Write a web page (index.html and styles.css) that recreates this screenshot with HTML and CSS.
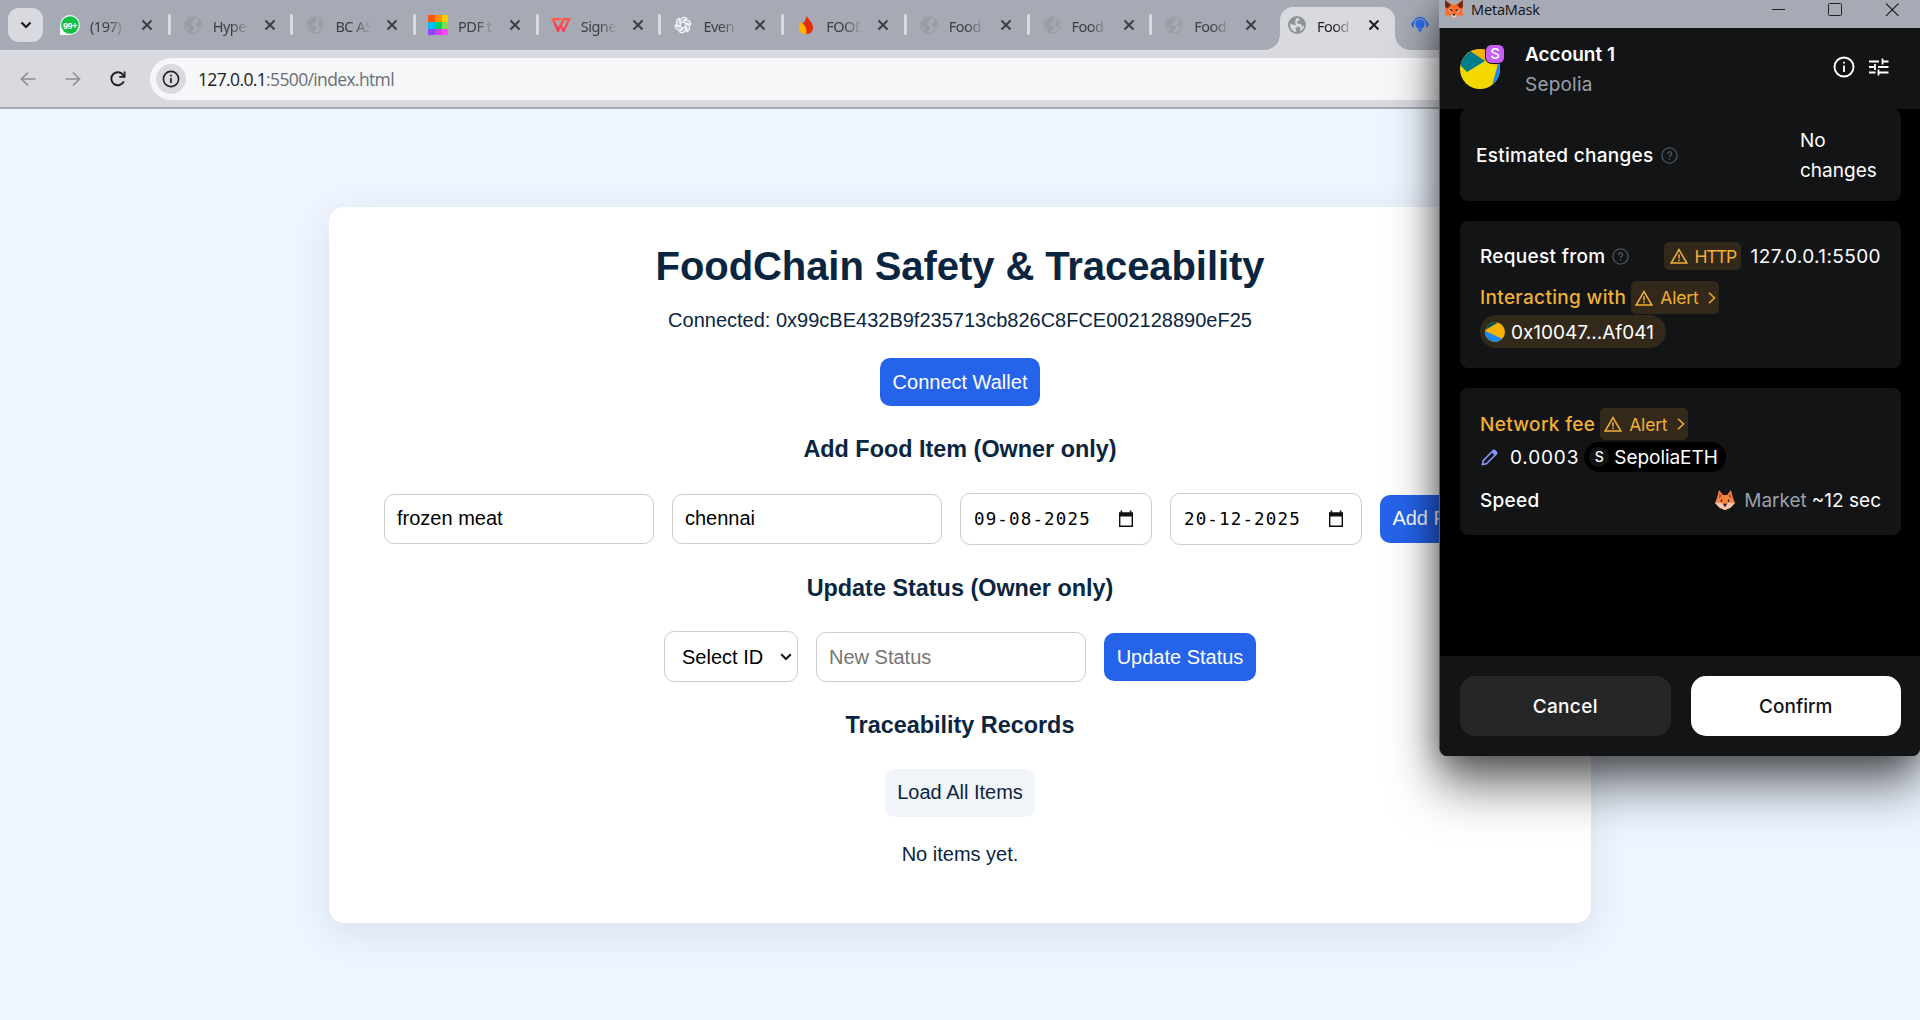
FILE: index.html
```html
<!DOCTYPE html>
<html lang="en">
<head>
<meta charset="utf-8">
<title>FoodChain Safety &amp; Traceability</title>
<link rel="stylesheet" href="styles.css">
</head>
<body>
<svg class="defs" aria-hidden="true">
  <symbol id="globe" viewBox="0 0 18 18"><circle cx="9" cy="9" r="8.2" fill="none" stroke="currentColor" stroke-width="1.3"/><path fill="currentColor" d="M2 6.5 6 2.6 10 1.8 11.5 3.2 9.5 4.6 9.3 6.6 7.2 7.4 6.4 9.2 9 9.4 10.8 11 10.4 13 8.6 14 8 16.6 5 15.6 4.6 12.4 2 9.6ZM13 4 15.8 6.6 16.6 9.8 14.6 11.4 12.6 10.6 12 8.4 13.4 7Z"/></symbol>
  <symbol id="globe-solid" viewBox="0 0 18 18"><circle cx="9" cy="9" r="9" fill="currentColor"/><path fill="#d9dae0" d="M2 7.5 6 9 9.500 9 9.500 11 7.500 12 8.500 16 5.500 15.500 2.500 12ZM8 2.500 11.500 2 11 4.500 9 5.500 9.500 7.500 13 8 14 11 16 9 15.500 12.500 12 15.500 12.500 12 8 9 7 6Z"/></symbol>
  <symbol id="close" viewBox="0 0 12 12"><path d="M1.5 1.5 10.5 10.5M10.5 1.5 1.5 10.5" fill="none" stroke="currentColor" stroke-width="2"/></symbol>
  <symbol id="warn" viewBox="0 0 18 16"><path d="M9 1.6 16.8 15H1.2Z" fill="none" stroke="currentColor" stroke-width="1.5"/><path d="M9 6.3V10.4M9 11.6V13.2" stroke="currentColor" stroke-width="1.5"/></symbol>
  <symbol id="chev" viewBox="0 0 8 12"><path d="M1 .8 6.5 6 1 11.2" fill="none" stroke="currentColor" stroke-width="1.5"/></symbol>
  <symbol id="help" viewBox="0 0 17 17"><circle cx="8.5" cy="8.5" r="7.6" fill="none" stroke="currentColor" stroke-width="1.4"/><path d="M6.5 7A2 2 0 1 1 9.4 8.6Q8.5 9.1 8.5 10M8.5 11.2V12.7" fill="none" stroke="currentColor" stroke-width="1.4"/></symbol>
  <symbol id="cal" viewBox="0 0 16 18"><path d="M1.7 6V16.2H14.3V6" fill="none" stroke="#111" stroke-width="1.4"/><path d="M1 2.2H2.6V.6H4.2V2.2H11.8V.6H13.4V2.2H15V6.4H1Z" fill="#111"/></symbol>
  <symbol id="fox" viewBox="0 0 20 18"><path d="M1 0 8 4.5H12L19 0 19 8 18 12 19 16 14 15 12 17.5H8L6 15 1 16 2 12 1 8Z" fill="#ff6a2a"/><path d="M1 0 7 5 3.5 8.6 1.2 7ZM19 0 13 5 16.500 8.600 18.800 7Z" fill="#6b2a16"/><path d="M3.5 9 7 8 8.5 12 6 14ZM16.5 9 13 8 11.5 12 14 14Z" fill="#ff9160"/><path d="M5.8 9 8.2 10.2 7.6 11.2ZM14.2 9 11.8 10.2 12.4 11.2Z" fill="#2a1a3a" stroke="#2a1a3a" stroke-width=".6"/><path d="M7.5 14H12.5L12 17.5H8Z" fill="#ded5ce"/><path d="M8.500 14H11.500L11 15.600H9Z" fill="#251a1a"/></symbol>
</svg>

<div class="browser">
  <div class="tabstrip">
    <div class="tabsearch"><svg width="12" height="8" viewBox="0 0 12 8"><path d="M1.5 1.5 6 6 10.5 1.5" fill="none" stroke="#1d1e22" stroke-width="2.2"/></svg></div>
    <div class="tab"><svg class="fav" viewBox="0 0 20 20"><path d="M0 20V10A10 10 0 1 1 10 20Z" fill="#f4f7f5"/><circle cx="10" cy="10" r="8.8" fill="#12c143"/><text x="10" y="13.6" text-anchor="middle" class="wa">99+</text></svg><span class="tt">(197)</span><svg class="x"><use href="#close"/></svg></div>
    <div class="tab"><svg class="fav dim"><use href="#globe"/></svg><span class="tt">Hype</span><svg class="x"><use href="#close"/></svg></div>
    <div class="tab"><svg class="fav dim"><use href="#globe"/></svg><span class="tt">BC AS</span><svg class="x"><use href="#close"/></svg></div>
    <div class="tab"><svg class="fav" viewBox="0 0 20 20" shape-rendering="crispEdges"><path fill="#ff5500" d="M0 0h7v7H0z"/><path fill="#ff9000" d="M7 0h7v7H7z"/><path fill="#ffcc00" d="M14 0h6v7h-6z"/><path fill="#00bbff" d="M0 7h7v7H0z"/><path fill="#00d166" d="M7 7h7v7H7z"/><path fill="#7de048" d="M14 7h6v7h-6z"/><path fill="#8a47ff" d="M0 14h7v6H0z"/><path fill="#cf40f5" d="M7 14h7v6H7z"/><path fill="#ff48fa" d="M14 14h6v6h-6z"/></svg><span class="tt">PDF t</span><svg class="x"><use href="#close"/></svg></div>
    <div class="tab"><svg class="fav" viewBox="0 0 20 20"><defs><linearGradient id="wps" x2="0" y2="1"><stop stop-color="#ff5b45"/><stop offset="1" stop-color="#ff3355"/></linearGradient></defs><path d="M0 3H10.500L9.300 5.300H3.700L7.300 12.500 12 3H20L13.300 17H11.800L9.800 12.800 7.700 17H6.300ZM13.300 5.300 11 10.200 12.600 13.500 16.500 5.300Z" fill="url(#wps)" fill-rule="evenodd"/></svg><span class="tt">Signe</span><svg class="x"><use href="#close"/></svg></div>
    <div class="tab"><svg class="fav" viewBox="0 0 20 20"><g fill="none" stroke="#f2f3f5" stroke-width="1.4"><path id="petal" d="M7.400 11.500V5.600A3.700 3.700 0 0 1 13.700 3.500L9.500 6"/><use href="#petal" transform="rotate(60 10 10)"/><use href="#petal" transform="rotate(120 10 10)"/><use href="#petal" transform="rotate(180 10 10)"/><use href="#petal" transform="rotate(240 10 10)"/><use href="#petal" transform="rotate(300 10 10)"/></g></svg><span class="tt">Even</span><svg class="x"><use href="#close"/></svg></div>
    <div class="tab"><svg class="fav" viewBox="0 0 20 20"><path d="M10.500 1C13 5 17 8 17 13A6.300 6.300 0 0 1 6 17Q5 13 6 9Q10 6 10.500 1Z" fill="#e22f04"/><path d="M4 7.500C7 8.500 11 11 10.500 18.500A5.500 5.500 0 0 1 3 12Q3.600 10 4 7.500Z" fill="#ffb400"/></svg><span class="tt">FOOD</span><svg class="x"><use href="#close"/></svg></div>
    <div class="tab"><svg class="fav dim"><use href="#globe"/></svg><span class="tt">Food</span><svg class="x"><use href="#close"/></svg></div>
    <div class="tab"><svg class="fav dim"><use href="#globe"/></svg><span class="tt">Food</span><svg class="x"><use href="#close"/></svg></div>
    <div class="tab last"><svg class="fav dim"><use href="#globe"/></svg><span class="tt">Food</span><svg class="x"><use href="#close"/></svg></div>
    <div class="tab active"><svg class="fav grey"><use href="#globe-solid"/></svg><span class="tt">Food</span><svg class="x"><use href="#close"/></svg></div>
    <div class="tab agent"><svg class="fav" viewBox="0 0 20 20"><circle cx="10" cy="9" r="4.800" fill="#2f6de8"/><path d="M3.500 9A6.500 6.500 0 0 1 16.500 9" fill="none" stroke="#2f6de8" stroke-width="1.400"/><path d="M3.500 6.500V12A3 3 0 0 1 3.500 6.500ZM16.500 6.500V12A3 3 0 0 0 16.500 6.500ZM8 14.800H12L10 16.500Z" fill="#2f6de8" stroke="#2f6de8"/></svg></div>
  </div>
  <div class="toolbar">
    <svg class="nav" viewBox="0 0 16 16"><path d="M15.500 8H2M8 1.500 1.500 8 8 14.500" fill="none" stroke="#8e9096" stroke-width="1.700"/></svg>
    <svg class="nav" viewBox="0 0 16 16"><path d="M.5 8H14M8 1.500 14.500 8 8 14.500" fill="none" stroke="#8e9096" stroke-width="1.700"/></svg>
    <svg class="nav reload" viewBox="0 0 16 16"><path d="M13.800 10.300A6.500 6.500 0 1 1 13.300 4.200L14.500 5.500" fill="none" stroke="#1f2023" stroke-width="2"/><path d="M15.500 .5V6.800H9.200V5H13.700V.5Z" fill="#1f2023"/></svg>
    <div class="omnibox">
      <span class="info"><svg width="18" height="18" viewBox="0 0 18 18"><circle cx="9" cy="9" r="7.600" fill="none" stroke="#222326" stroke-width="1.600"/><path d="M9 8V13M9 4.800V6.500" stroke="#222326" stroke-width="1.700"/></svg></span>
      <span class="url">127.0.0.1<span class="path">:5500/index.html</span></span>
    </div>
  </div>
  <main class="page">
    <section class="card">
      <h1>FoodChain Safety &amp; Traceability</h1>
      <p class="wallet">Connected: 0x99cBE432B9f235713cb826C8FCE002128890eF25</p>
      <button class="btn connect">Connect Wallet</button>
      <h3>Add Food Item (Owner only)</h3>
      <div class="row">
        <input class="field" type="text" value="frozen meat">
        <input class="field" type="text" value="chennai">
        <div class="date"><span>09-08-2025</span><svg width="16" height="18"><use href="#cal"/></svg></div>
        <div class="date"><span>20-12-2025</span><svg width="16" height="18"><use href="#cal"/></svg></div>
        <button class="btn add">Add Food Item</button>
      </div>
      <h3>Update Status (Owner only)</h3>
      <div class="row second">
        <div class="select"><span>Select ID</span><svg width="12" height="8" viewBox="0 0 12 8"><path d="M1.200 1.200 6 6 10.800 1.200" fill="none" stroke="#111" stroke-width="2"/></svg></div>
        <input class="field" type="text" placeholder="New Status">
        <button class="btn update">Update Status</button>
      </div>
      <h3>Traceability Records</h3>
      <button class="btn load">Load All Items</button>
      <p class="empty">No items yet.</p>
    </section>
  </main>
</div>

<aside class="popup">
  <div class="titlebar">
    <svg class="foxicon"><use href="#fox"/></svg><span class="apptitle">MetaMask</span>
    <svg class="winctl" viewBox="0 0 130 16"><path d="M2 9.500H15" stroke="#222" stroke-width="1"/><rect x="58.500" y="3.500" width="13" height="12" rx="1" fill="none" stroke="#222"/><path d="M116 3.500 128.500 16M128.500 3.500 116 16" stroke="#222" stroke-width="1.100"/></svg>
  </div>
  <header class="account">
    <svg class="avatar" viewBox="0 0 46 46"><defs><clipPath id="av"><circle cx="20" cy="26" r="20"/></clipPath></defs><g clip-path="url(#av)"><path fill="#f5d800" d="M0 0H46V46H0z"/><path fill="#f3b300" d="M5 10 24 17.500 40 24 46 0H5Z"/><path fill="#017d8b" d="M-2 20 10 8 25 18 7 29Z"/><path fill="#1689f5" d="M40 14 31 46H46V14Z"/></g><rect x="25.500" y="1.500" width="19" height="19" rx="6" fill="#c65df5" stroke="#131416"/><text x="35" y="16.200" text-anchor="middle" class="net">S</text></svg>
    <div class="who"><span class="name">Account 1</span><span class="sub">Sepolia</span></div>
    <svg class="hicon" viewBox="0 0 22 22"><circle cx="11" cy="11" r="9.500" fill="none" stroke="#fff" stroke-width="1.900"/><path d="M11 9.500V16M11 5.800V7.600" stroke="#fff" stroke-width="1.800"/></svg>
    <svg class="hicon sliders" viewBox="0 0 20 20"><path d="M0 4.500H10M13.500 4.500H19.500M13.500 1.500V7.500M0 10H6M6 7V13M9 10H19.500M0 15.500H6.500M9.500 15.500H19.500M9.500 12.500V18.500" fill="none" stroke="#fff" stroke-width="1.800"/></svg>
  </header>
  <div class="body">
    <div class="panel est">
      <span class="lbl">Estimated changes</span><svg class="q"><use href="#help"/></svg>
      <span class="nochg">No changes</span>
    </div>
    <div class="panel req">
      <div class="line l1"><span class="lbl">Request from</span><svg class="q"><use href="#help"/></svg><span class="badge http"><svg class="w"><use href="#warn"/></svg><span>HTTP</span></span><span class="val ip">127.0.0.1:5500</span></div>
      <div class="line l2"><span class="lbl amber">Interacting with</span><span class="badge alert"><svg class="w"><use href="#warn"/></svg><span>Alert</span><svg class="c"><use href="#chev"/></svg></span></div>
      <div class="chip"><svg width="20" height="20" viewBox="0 0 20 20"><defs><clipPath id="ad"><circle cx="10" cy="10" r="10"/></clipPath></defs><g clip-path="url(#ad)"><path fill="#f5b000" d="M0 0H20V20H0z"/><path fill="#014c58" d="M0 0H14L0 8Z"/><path fill="#1689f5" d="M0 9 20 18V20H0Z"/></g></svg><span>0x10047...Af041</span></div>
    </div>
    <div class="panel fee">
      <div class="line f1"><span class="lbl amber">Network fee</span><span class="badge alert"><svg class="w"><use href="#warn"/></svg><span>Alert</span><svg class="c"><use href="#chev"/></svg></span></div>
      <div class="line f2"><svg class="pen" viewBox="0 0 17 17"><path d="M1.500 15.500 2.200 11.600 12 1.800Q13 1 14 1.800L15.200 3Q16 4 15.200 5L5.400 14.800Z" fill="none" stroke="#8b99ff" stroke-width="1.600"/><path d="M10.500 3 12.500 1 16 4.500 14 6.500Z" fill="#8b99ff"/></svg><span class="val amt">0.0003</span><span class="token"><span class="s">S</span><span class="eth">SepoliaETH</span></span></div>
      <div class="line f3"><span class="lbl">Speed</span><svg class="foxsm" viewBox="0 0 20 20"><path d="M4 0 8 5H12L16 0 18 8 20 13 15 18 10 20 5 18 0 13 2 8Z" fill="#f7803c"/><path d="M4.500 3.500 6.500 6 4 8ZM15.500 3.500 13.500 6 16 8Z" fill="#a53d38"/><path d="M0 13 6 12.500 10 15 14 12.500 20 13 15 18 10 20 5 18Z" fill="#f2c6b0"/><path d="M6.500 9.500V12M13.500 9.500V12M9 14.500H11L10 16Z" fill="#30202a" stroke="#30202a" stroke-width="1.300"/></svg><span class="mkt">Market</span><span class="val sec">~12 sec</span></div>
    </div>
  </div>
  <footer class="actions"><button class="cancel">Cancel</button><button class="confirm">Confirm</button></footer>
</aside>
</body>
</html>
```
FILE: styles.css
```css
* { box-sizing: border-box; }
body { margin: 0; width: 1920px; height: 1020px; overflow: hidden; position: relative; font-family: "Liberation Sans", Arial, sans-serif; font-size: 20px; color: #0a2540; }
button, input { font: inherit; }
.defs { position: absolute; width: 0; height: 0; }
svg { flex: none; display: block; }
.browser { display: flex; flex-direction: column; height: 1020px; }

/* Tab strip */
.tabstrip { display: flex; height: 50px; background: #a6aab5; padding-left: 8px; }
.tabsearch { width: 35px; height: 34px; margin: 8px 5px 0 0; border-radius: 11px; background: #d9dae0; display: flex; align-items: center; justify-content: center; flex: none; }
.tab { position: relative; width: 122.700px; flex: none; display: flex; align-items: center; padding: 0 0 0 12px; color: #3c3e44; }
.tab:not(.last):not(.active):not(.agent)::after { content: ""; position: absolute; right: 0; top: 14px; width: 3px; height: 21px; border-radius: 2px; background: #d9dae0; }
.fav { width: 20px; height: 20px; }
.dim { width: 18px; height: 18px; margin: 0 1px; color: #90959b; opacity: .6; }
.grey { width: 18px; height: 18px; margin: 0 1px; color: #8e9499; }
.tt { width: 40px; margin: 1px 11px 0 10px; white-space: nowrap; font: 14.500px/24px "Noto Sans", "Open Sans", sans-serif; letter-spacing: -.5px; -webkit-mask-image: linear-gradient(90deg, #000 18px, transparent 36px); mask-image: linear-gradient(90deg, #000 18px, transparent 36px); }
.x { width: 12px; height: 12px; }
.wa { font: bold 9px "Liberation Sans", sans-serif; letter-spacing: -.4px; fill: #fff; }
.active { color: #1f2023; }
.active::before { content: ""; position: absolute; left: 5px; top: 7px; width: 115px; height: 43px; border-radius: 13px 13px 0 0; background: #d9dae0; }
.active::after { content: ""; position: absolute; left: -10px; bottom: 0; width: 145px; height: 15px; background: radial-gradient(circle at 0 0, transparent 14.500px, #d9dae0 15px) 0 0 / 15px 15px no-repeat, radial-gradient(circle at 100% 0, transparent 14.500px, #d9dae0 15px) 100% 0 / 15px 15px no-repeat; }
.active > * { position: relative; z-index: 1; }

/* Address bar */
.toolbar { height: 59px; background: linear-gradient(#d9dae0, #d9dae0); border-bottom: 2px solid #a9abb3; display: flex; align-items: flex-start; padding: 8px 0 0 20px; }
.nav { width: 16px; height: 16px; margin: 13px 29px 0 0; }
.reload { margin-right: 24px; }
.omnibox { flex: 1; height: 42px; border-radius: 21px 0 0 21px; background: #f5f7f9; display: flex; align-items: center; padding-left: 6px; }
.info { width: 30px; height: 30px; border-radius: 50%; background: #d9dae0; display: flex; align-items: center; justify-content: center; margin-right: 12px; }
.url { font: 17.500px/24px "Open Sans", "Noto Sans", sans-serif; letter-spacing: -.64px; color: #1f2023; white-space: nowrap; }
.path { color: #6b6d73; }

/* Page */
.page { flex: 1; background: #eef5ff; padding: 98px 329px 0; }
.card { height: 716px; padding: 36px 55px 0; border-radius: 15px; background: #fff; box-shadow: 0 10px 38px rgba(10, 37, 64, .1); display: flex; flex-direction: column; align-items: center; }
h1 { margin: 0; font-size: 40px; line-height: 46px; letter-spacing: -.08px; white-space: nowrap; }
.wallet { margin: 20px 0 26px; line-height: 23px; white-space: nowrap; }
h3 { margin: 30px 0 30px; font-size: 23.400px; line-height: 27px; }
.btn { height: 48px; border: 0; border-radius: 10px; background: #2563eb; color: #fff; padding: 0; flex: none; white-space: nowrap; }
.connect { width: 160px; }
.row { display: flex; align-items: center; gap: 18px; height: 52px; width: 1152px; }
.second { width: auto; height: 51px; margin-top: -1px; }
.field { width: 270px; height: 50px; border: 1px solid #ccc; border-radius: 10px; padding: 0 12px 1px; background: #fff; color: #000; flex: none; }
.second .field { padding: 1px 12px 0; }
.field::placeholder { color: #757575; }
.date { width: 192px; height: 52px; border: 1px solid #ccc; border-radius: 10px; padding: 0 17px 0 13px; display: flex; align-items: center; justify-content: space-between; color: #000; font: 17.500px "DejaVu Sans Mono", monospace; letter-spacing: 1.150px; flex: none; }
.add { width: 156px; padding-bottom: 1px; }
.select { width: 134px; height: 51px; border: 1px solid #ccc; border-radius: 10px; padding: 1px 5px 0 17px; display: flex; align-items: center; justify-content: space-between; color: #000; }
.update { width: 152px; padding-top: 1px; }
.load { width: 150px; padding-bottom: 2px; background: #f1f4f9; color: #0a2540; }
.empty { margin: 26px 0 0; line-height: 23px; }

/* Wallet window */
.popup { position: absolute; left: 1439px; top: 0; width: 481px; height: 756px; border-radius: 0 0 8px 8px; border-left: 1px solid #55585c; background: #000; box-shadow: 0 30px 50px rgba(0, 0, 0, .55), 0 4px 30px rgba(0, 0, 0, .38); display: flex; flex-direction: column; font-family: Inter, sans-serif; font-size: 19px; color: #fff; white-space: nowrap; }
.titlebar { height: 28px; margin-left: -1px; background: #a6aab5; display: flex; padding-left: 5px; }
.foxicon { width: 20px; height: 18px; }
.apptitle { margin-left: 7px; font: 14.500px/20px "Open Sans", sans-serif; letter-spacing: -.15px; color: #111; flex: 1; }
.winctl { width: 130px; height: 16px; margin-right: 20px; }
.account { height: 81px; background: #131416; display: flex; padding-left: 20px; }
.avatar { width: 46px; height: 46px; margin-top: 15px; }
.net { font: 500 15px Inter, sans-serif; fill: #fff; }
.who { display: flex; flex-direction: column; margin: 12px 0 0 19px; flex: 1; line-height: 30px; }
.name { font-weight: 600; }
.sub { color: #9ba0ac; letter-spacing: .2px; }
.hicon { width: 22px; height: 22px; margin-top: 28px; }
.sliders { width: 20px; height: 20px; margin: 29px 31px 0 14px; }
.body { flex: 1; padding: 0 19px 0 20px; display: flex; flex-direction: column; gap: 20px; }
.panel { background: #131416; border-radius: 8px; }
.est { border-radius: 8px; }
.lbl { font-weight: 550; letter-spacing: .29px; }
.q { width: 17px; height: 17px; color: #4b505c; margin-left: 7px; }
.est { height: 92px; display: flex; align-items: center; padding: 0 24px 0 16px; }
.nochg { margin: 2px 0 0 auto; width: 77px; white-space: normal; line-height: 30px; }
.req { height: 147px; padding: 21px 20px 0; }
.fee { height: 147px; padding: 20px 20px 0; }
.line { display: flex; align-items: center; }
.badge { display: flex; align-items: center; background: #33291a; border-radius: 5px; color: #f0b034; font-size: 17.500px; letter-spacing: -.2px; }
.w { width: 18px; height: 16px; }
.c { width: 8px; height: 12px; }
.http { height: 28px; width: 77px; padding-left: 6px; gap: 7px; margin-left: auto; letter-spacing: -1.400px; }
.alert { height: 33px; width: 88px; padding-left: 4px; gap: 7px; margin-left: 5px; }
.alert .c { margin-left: 3px; }
.l1 { height: 28px; }
.val { margin-left: 10px; }
.ip { letter-spacing: .4px; }
.l2 { height: 33px; margin-top: 11px; }
.amber { color: #f0b034; font-weight: 500; letter-spacing: .33px; }
.chip { width: 186px; height: 33px; margin-top: 1px; border-radius: 17px; background: #33291a; display: flex; align-items: center; padding: 1px 0 0 5px; gap: 6px; }
.f1 { height: 32px; }
.f1 .lbl { padding-top: 1px; }
.f1 .badge { height: 32px; }
.f2 { height: 30px; margin-top: 2px; }
.pen { width: 17px; height: 17px; margin-left: 1px; }
.amt { margin-left: 12px; letter-spacing: .85px; }
.token { width: 142px; height: 30px; margin-left: 5px; border-radius: 15px; background: #000; display: flex; align-items: center; padding-left: 5px; gap: 5px; }
.eth { letter-spacing: -.05px; }
.s { width: 20px; height: 20px; border-radius: 50%; background: #131416; font: 500 14px/20px Inter, sans-serif; text-align: center; }
.f3 { height: 30px; margin-top: 13px; }
.foxsm { width: 20px; height: 20px; margin-left: auto; }
.mkt { margin-left: 9px; color: #9ba0ac; }
.f3 .val { margin-left: 5px; }
.actions { height: 100px; padding: 20px 19px 0 20px; display: grid; grid-template-columns: 1fr 1fr; gap: 20px; background: #131416; border-radius: 0 0 8px 8px; }
.actions button { height: 60px; border: 0; border-radius: 15px; font-weight: 500; padding: 0; }
.cancel { background: #242628; color: #fff; letter-spacing: .35px; }
.confirm { background: #fff; color: #121314; }
```
